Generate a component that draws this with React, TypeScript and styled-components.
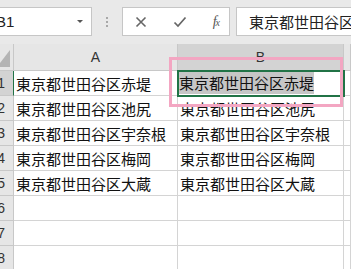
import React from 'react';
import styled, { createGlobalStyle } from 'styled-components';

const GlobalStyle = createGlobalStyle`
  body {
    margin: 0;
    background: #ffffff;
    overflow: hidden;
  }
`;

const Page = styled.div`
  position: relative;
  width: 351px;
  height: 269px;
  overflow: hidden;
  font-family: "Noto Sans CJK JP", "Noto Sans", sans-serif;
`;

const FormulaBar = styled.div`
  display: flex;
  align-items: flex-start;
  height: 44px;
  padding-top: 7px;
  box-sizing: border-box;
  background: #e9e9e9;
`;

const NameBox = styled.div`
  position: relative;
  display: flex;
  align-items: center;
  width: 92px;
  height: 29px;
  box-sizing: border-box;
  background: #ffffff;
  border: 1px solid #c6c6c6;
  border-left: none;
  overflow: hidden;
  font-family: "Liberation Sans", sans-serif;
  font-size: 15px;
  color: #222;
  text-indent: -4px;
`;

const DropArrow = styled.span`
  position: absolute;
  right: 8px;
  top: 12px;
  width: 0;
  height: 0;
  border-left: 3px solid transparent;
  border-right: 3px solid transparent;
  border-top: 3px solid #555;
`;

const Grip = styled.div`
  display: flex;
  flex-direction: column;
  justify-content: center;
  gap: 2px;
  width: 30px;
  height: 29px;
  align-items: center;

  span {
    width: 2px;
    height: 2px;
    background: #a8a8a8;
  }
`;

const ActionBox = styled.div`
  display: flex;
  align-items: center;
  justify-content: space-between;
  width: 108px;
  height: 29px;
  padding: 0 10px 0 11px;
  box-sizing: border-box;
  background: #ffffff;
  border: 1px solid #c6c6c6;
`;

const ActionIcon = styled.svg`
  display: block;
`;

const Fx = styled.span`
  font-family: "Liberation Serif", serif;
  font-style: italic;
  font-size: 14px;
  color: #555;
  letter-spacing: -1px;

  small {
    font-size: 10px;
  }
`;

const FormulaInput = styled.div`
  flex: 1;
  height: 29px;
  margin-left: 6px;
  padding-left: 12px;
  box-sizing: border-box;
  background: #ffffff;
  border: 1px solid #c6c6c6;
  border-right: none;
  font-size: 15px;
  line-height: 27px;
  white-space: nowrap;
  overflow: hidden;
  color: #222;
`;

const Grid = styled.div`
  display: grid;
  grid-template-columns: 14px 164px 166px 1fr;
  grid-auto-rows: 25px;
  grid-template-rows: 27px;
`;

const Corner = styled.div`
  position: relative;
  background: #e6e6e6;
  border-right: 1px solid #c8c8c8;
  border-bottom: 1px solid #c8c8c8;
  overflow: hidden;

  &::after {
    content: '';
    position: absolute;
    right: 3px;
    bottom: 3px;
    border-left: 13px solid transparent;
    border-bottom: 17px solid #b4b4b4;
  }
`;

const ColHead = styled.div<{ $active?: boolean }>`
  display: flex;
  align-items: center;
  justify-content: center;
  background: ${(p) => (p.$active ? '#d3d3d3' : '#e6e6e6')};
  border-right: 1px solid #c8c8c8;
  border-bottom: 1px solid ${(p) => (p.$active ? '#217346' : '#c8c8c8')};
  font-family: "Liberation Sans", sans-serif;
  font-size: 14px;
  color: #333;
`;

const RowHead = styled.div<{ $active?: boolean }>`
  display: flex;
  align-items: center;
  justify-content: flex-end;
  padding-right: 8px;
  box-sizing: border-box;
  overflow: hidden;
  background: ${(p) => (p.$active ? '#d3d3d3' : '#e6e6e6')};
  border-right: 1px solid ${(p) => (p.$active ? '#217346' : '#c8c8c8')};
  border-bottom: 1px solid #c8c8c8;
  font-family: "Liberation Sans", sans-serif;
  font-size: 14px;
  color: #333;
`;

const Cell = styled.div<{ $selected?: boolean }>`
  display: flex;
  align-items: center;
  padding-left: ${(p) => (p.$selected ? '1px' : '2px')};
  border-right: 1px solid #d4d4d4;
  border-bottom: 1px solid #d4d4d4;
  font-size: 15px;
  color: #111;
  white-space: nowrap;
  overflow: visible;
  outline: ${(p) => (p.$selected ? '2px solid #217346' : 'none')};
  outline-offset: -1px;
  position: relative;
  z-index: ${(p) => (p.$selected ? 1 : 0)};
`;

const Highlight = styled.span`
  background: #c6c6c6;
  line-height: 22px;
`;

const Annotation = styled.div`
  position: absolute;
  left: 169px;
  top: 57px;
  width: 174px;
  height: 50px;
  box-sizing: border-box;
  border: 3px solid #f3a6c2;
  z-index: 2;
`;

const rows = [
  '東京都世田谷区赤堤',
  '東京都世田谷区池尻',
  '東京都世田谷区宇奈根',
  '東京都世田谷区梅岡',
  '東京都世田谷区大蔵',
  '',
  '',
  '',
];

const App: React.FC = () => {
  return (
    <Page>
      <GlobalStyle />
      <FormulaBar>
        <NameBox>
          B1
          <DropArrow />
        </NameBox>
        <Grip>
          <span />
          <span />
          <span />
        </Grip>
        <ActionBox>
          <ActionIcon width="14" height="14" viewBox="0 0 14 14">
            <path d="M2.5 2.5 L11.5 11.5 M11.5 2.5 L2.5 11.5" stroke="#666" strokeWidth="1.6" fill="none" />
          </ActionIcon>
          <ActionIcon width="14" height="14" viewBox="0 0 14 14">
            <path d="M1.5 7.5 L5 11 L12.5 2.5" stroke="#666" strokeWidth="1.7" fill="none" />
          </ActionIcon>
          <Fx>
            f<small>x</small>
          </Fx>
        </ActionBox>
        <FormulaInput>東京都世田谷区赤堤</FormulaInput>
      </FormulaBar>
      <Grid>
        <Corner />
        <ColHead>A</ColHead>
        <ColHead $active>B</ColHead>
        <ColHead />
        {rows.map((text, i) => (
          <React.Fragment key={i}>
            <RowHead $active={i === 0}>{i + 1}</RowHead>
            <Cell>{text}</Cell>
            <Cell $selected={i === 0}>{i === 0 ? <Highlight>{text}</Highlight> : text}</Cell>
            <Cell />
          </React.Fragment>
        ))}
      </Grid>
      <Annotation />
    </Page>
  );
};

export default App;
